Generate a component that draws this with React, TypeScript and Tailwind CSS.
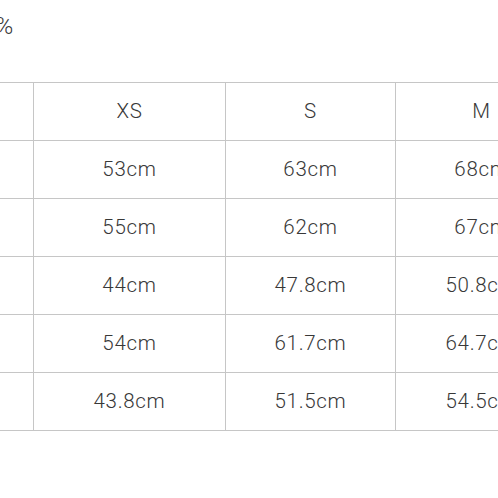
const sizes = ["XS", "S", "M", "L"]

const rows = [
  ["53cm", "63cm", "68cm", "73cm"],
  ["55cm", "62cm", "67cm", "72cm"],
  ["44cm", "47.8cm", "50.8cm", "53.8cm"],
  ["54cm", "61.7cm", "64.7cm", "67.7cm"],
  ["43.8cm", "51.5cm", "54.5cm", "57.5cm"],
]

const widths = ["w-[192px]", "w-[170px]", "w-[172px]", "w-[172px]"]

function Row({ cells }: { cells: string[] }) {
  return (
    <div className="flex h-[58px] border-b border-[#c6c6c6]">
      <div className="w-[101px] shrink-0 border-r border-[#c6c6c6]" />
      {cells.map((c, i) => (
        <div
          key={i}
          className={`${widths[i]} shrink-0 border-r border-[#c6c6c6] flex items-center justify-center`}
        >
          {c}
        </div>
      ))}
    </div>
  )
}

export default function App() {
  return (
    <div
      className="w-[498px] h-[498px] overflow-hidden bg-white text-[#383838] text-[20.5px] font-light tracking-[0.7px]"
      style={{ fontFamily: "Roboto, 'Noto Sans CJK SC', sans-serif" }}
    >
      <p className="-ml-[120px] mt-[12px] w-[134px] text-right whitespace-nowrap text-[24px] leading-[28px]">
        棉 100%
      </p>

      {/* size table */}
      <div className="-ml-[67px] mt-[42px] w-[900px] border-t border-[#c6c6c6]">
        <Row cells={sizes} />
        {rows.map((r, i) => (
          <Row key={i} cells={r} />
        ))}
      </div>
    </div>
  )
}
